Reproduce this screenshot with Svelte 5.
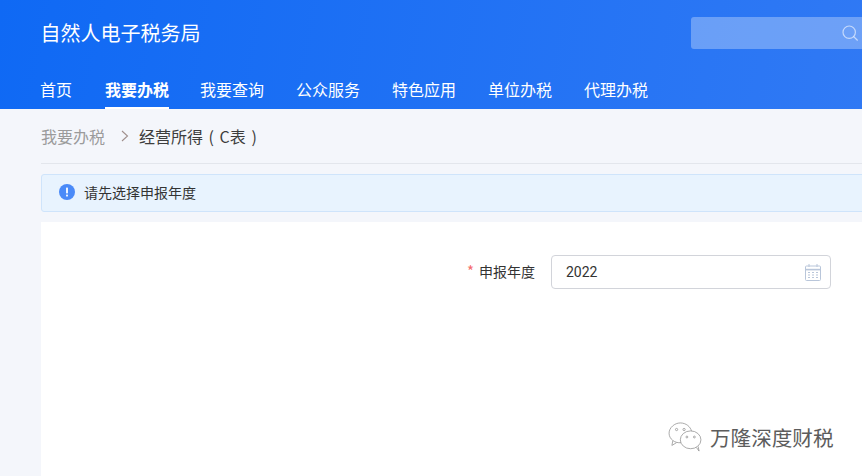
<script lang="ts">
  const navItems = ['首页', '我要办税', '我要查询', '公众服务', '特色应用', '单位办税', '代理办税'];
  const activeNav = '我要办税';
</script>

<div class="page">
  <header class="header">
    <div class="top">
      <div class="title">自然人电子税务局</div>
      <div class="search">
        <svg viewBox="0 0 16 16" fill="none" stroke="currentColor" stroke-width="1.2" aria-hidden="true">
          <circle cx="7.2" cy="7.2" r="6.2" />
          <path d="M11.8 11.8 L15.4 15.2" stroke-linecap="round" />
        </svg>
      </div>
    </div>
    <nav class="nav">
      {#each navItems as item}
        <span class="nav-item" class:active={item === activeNav}>{item}</span>
      {/each}
    </nav>
  </header>

  <main class="main">
    <div class="crumbs">
      <span class="crumb-parent">我要办税</span>
      <svg class="crumb-sep" viewBox="0 0 8 12" fill="none" stroke="currentColor" stroke-width="1.1" aria-hidden="true">
        <path d="M1 1 L6.5 6 L1 11" />
      </svg>
      <span class="crumb-current">经营所得 ( C表 )</span>
    </div>

    <div class="alert">
      <svg class="alert-icon" viewBox="0 0 16 16" aria-hidden="true">
        <circle cx="8" cy="8" r="8" fill="#4a8af8" />
        <rect x="7.1" y="3.4" width="1.8" height="6" rx="0.6" fill="#fff" />
        <rect x="7.1" y="10.6" width="1.8" height="1.9" rx="0.6" fill="#fff" />
      </svg>
      <span>请先选择申报年度</span>
    </div>

    <section class="card">
      <div class="form-row">
        <label class="form-label" for="year"><span class="req">*</span>申报年度</label>
        <div class="input">
          <input id="year" value="2022" readonly />
          <svg viewBox="0 0 16 17" fill="none" stroke="#b9c6da" stroke-width="1" aria-hidden="true">
            <rect x="0.5" y="2" width="15" height="14.5" rx="1" />
            <path d="M0.5 5.6 H15.5" stroke-width="1.6" />
            <path d="M4 0 V3 M12 0 V3" />
            <path d="M3 8.5 H5 M7 8.5 H9 M11 8.5 H13 M3 11 H5 M7 11 H9 M11 11 H13 M3 13.5 H5 M7 13.5 H9 M11 13.5 H13" stroke-width="1.2" />
          </svg>
        </div>
      </div>
    </section>
  </main>

  <div class="watermark">
    <svg viewBox="0 0 36 32" fill="none" stroke="#8f8f8f" stroke-width="0.8" aria-hidden="true">
      <path d="M14 22 C7 23 1 18 1 12 C1 6 7 1 13 1 C19 1 24 5 25 10" />
      <path d="M5 20 L4 25 L9 22" />
      <circle cx="9" cy="8" r="1.2" />
      <circle cx="17" cy="8" r="1.2" />
      <ellipse cx="24" cy="19" rx="11" ry="9.5" fill="#fff" />
      <path d="M30 27 L33 31 L32 26" fill="#fff" />
      <circle cx="20" cy="16" r="1" />
      <circle cx="28" cy="16" r="1" />
    </svg>
    <span>万隆深度财税</span>
  </div>
</div>

<style>
  :global(body) {
    margin: 0;
    overflow: hidden;
  }

  .page {
    position: relative;
    width: 862px;
    height: 476px;
    overflow: hidden;
    background: #f4f6fb;
    font-family: "Noto Sans CJK SC", "Liberation Sans", sans-serif;
  }

  .header {
    height: 109px;
    box-sizing: border-box;
    padding: 17px 0 0 41px;
    background: linear-gradient(100deg, #0f69f4 0%, #3079f4 100%);
    color: #fff;
  }

  .top {
    display: flex;
    justify-content: space-between;
    height: 32px;
  }

  .title {
    font-size: 20px;
    line-height: 32px;
    text-indent: -0.5px;
  }

  .search {
    display: flex;
    align-items: center;
    justify-content: flex-end;
    box-sizing: border-box;
    width: 175px;
    margin-right: -4px;
    padding-right: 8px;
    border-radius: 3px;
    background: rgba(255, 255, 255, 0.3);
    color: rgba(255, 255, 255, 0.6);
  }

  .search svg {
    width: 16px;
    height: 16px;
  }

  .nav {
    display: flex;
    gap: 32px;
    margin-top: 24px;
  }

  .nav-item {
    height: 36px;
    box-sizing: border-box;
    padding-right: 1px;
    font-size: 16px;
    line-height: 32px;
    text-indent: -1px;
  }

  .nav-item.active {
    padding-right: 0;
    font-weight: 700;
    text-indent: 0;
    border-bottom: 2px solid #fff;
  }

  .main {
    padding-left: 41px;
  }

  .crumbs {
    display: flex;
    align-items: center;
    height: 54px;
    border-bottom: 1px solid #e3e6ec;
    font-size: 16px;
  }

  .crumb-parent {
    color: #9b9b9b;
  }

  .crumb-sep {
    width: 8px;
    height: 12px;
    margin: 0 10px 0 16px;
    color: #a08f8c;
  }

  .crumb-current {
    color: #3d3d3d;
    word-spacing: 2px;
  }

  .alert {
    display: flex;
    align-items: center;
    gap: 9px;
    width: 840px;
    height: 38px;
    box-sizing: border-box;
    margin-top: 10px;
    padding: 0 0 2px 17px;
    border: 1px solid #cfe4fb;
    border-radius: 3px;
    background: #e8f3fe;
    color: #333;
    font-size: 14px;
  }

  .alert-icon {
    width: 16px;
    height: 16px;
  }

  .card {
    height: 260px;
    margin-top: 10px;
    padding-top: 33px;
    background: #fff;
  }

  .form-row {
    display: flex;
    align-items: center;
    height: 34px;
    padding-left: 419px;
  }

  .form-label {
    width: 75px;
    margin-right: 16px;
    padding-bottom: 3px;
    color: #333;
    font-size: 14px;
    text-align: right;
    white-space: nowrap;
  }

  .req {
    margin-right: 5px;
    color: #f56c6c;
    font-size: 15px;
  }

  .input {
    display: flex;
    align-items: center;
    width: 280px;
    height: 34px;
    box-sizing: border-box;
    padding: 0 9px 0 14px;
    border: 1px solid #d2d4da;
    border-radius: 4px;
    background: #fff;
  }

  .input input {
    flex: 1;
    min-width: 0;
    padding: 0;
    border: 0;
    outline: 0;
    color: #333;
    font-family: Roboto, "Liberation Sans", sans-serif;
    font-size: 14px;
  }

  .input svg {
    width: 16px;
    height: 17px;
  }

  .watermark {
    position: absolute;
    left: 668px;
    top: 422px;
    display: flex;
    align-items: center;
    gap: 8px;
    color: #5c5c5c;
    font-size: 20.6px;
  }

  .watermark svg {
    width: 34px;
    height: 30px;
  }
</style>
